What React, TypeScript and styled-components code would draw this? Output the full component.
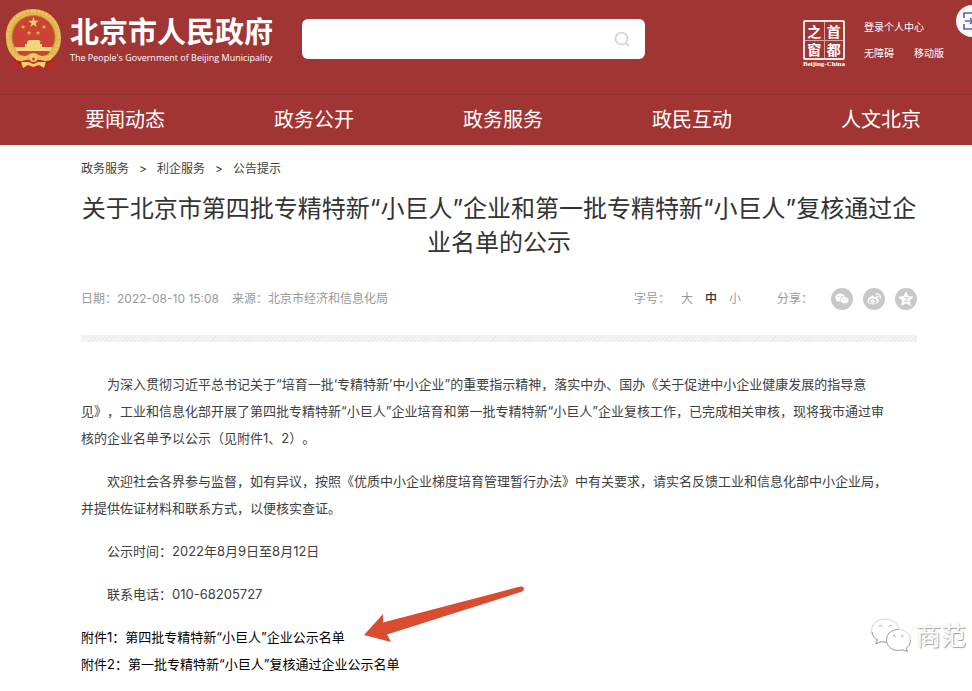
import React from "react";
import styled, { createGlobalStyle, css } from "styled-components";

const GlobalStyle = createGlobalStyle`
  *, *::before, *::after { box-sizing: border-box; }
  body {
    margin: 0;
    background: #fff;
    color: #404040;
    font-family: Inter, "Noto Sans CJK SC", sans-serif;
    font-size: 13px;
    text-spacing-trim: space-all;
    overflow-x: hidden;
  }
  h1, p, ul, ol { margin: 0; padding: 0; }
  ul, ol { list-style: none; }
  a { color: inherit; text-decoration: none; }
  button { border: 0; padding: 0; background: none; font: inherit; color: inherit; cursor: pointer; }
`;

const Page = styled.div`
  position: relative;
  min-height: 100vh;
  overflow: hidden;
`;

const Header = styled.header`
  background: #a13534;
  color: #fff;
`;

const TopBar = styled.div`
  display: flex;
  align-items: flex-start;
  height: 94px;
  padding: 8px 28px 0 5px;
`;

const Brand = styled.a`
  display: flex;
  gap: 8px;
  flex: none;
  width: 297px;
`;

const BrandText = styled.span`
  display: flex;
  flex-direction: column;
  padding-top: 3px;
  white-space: nowrap;
`;

const BrandName = styled.strong`
  font-family: "Noto Sans CJK SC", sans-serif;
  font-size: 29px;
  line-height: 38px;
  font-weight: 700;
`;

const BrandSub = styled.span`
  font-family: "Open Sans", sans-serif;
  font-size: 9px;
  line-height: 18px;
`;

const Search = styled.form`
  display: flex;
  align-items: center;
  flex: 0 1 343px;
  height: 40px;
  margin-top: 11px;
  padding-right: 15px;
  border-radius: 6px;
  background: #fff;
`;

const SearchInput = styled.input`
  flex: 1;
  min-width: 0;
  height: 100%;
  padding: 0 14px;
  border: 0;
  outline: 0;
  background: none;
  font: inherit;
`;

const SearchButton = styled.button`
  display: flex;
  color: #d2d2d2;
`;

const Seal = styled.a`
  display: flex;
  flex-direction: column;
  align-items: center;
  margin: 12px 17px 0 auto;
  width: 46px;
`;

const SealGrid = styled.span`
  display: grid;
  grid-template-columns: 1fr 1fr;
  grid-template-rows: 1fr 1fr;
  width: 42px;
  height: 40px;
  gap: 1px;
  border: 2px solid #f8e6e3;
  border-radius: 2px;
  background: #d9a5a2;
`;

const SealCell = styled.span`
  display: flex;
  align-items: center;
  justify-content: center;
  background: #a13534;
  font-family: "Noto Sans CJK SC", sans-serif;
  font-size: 14px;
  line-height: 14px;
  font-weight: 700;
`;

const SealCaption = styled.span`
  font-family: "Liberation Serif", serif;
  font-size: 7px;
  line-height: 8px;
  font-weight: 700;
  white-space: nowrap;
`;

const UserLinks = styled.nav`
  display: grid;
  grid-template-columns: auto auto;
  column-gap: 20px;
  margin-top: 6px;
  font-size: 10px;
  line-height: 26px;
  white-space: nowrap;
`;

const UserLink = styled.a<{ $wide?: boolean }>`
  ${(p) => p.$wide && css`grid-column: 1 / -1;`}
`;

const MainNav = styled.nav`
  display: flex;
  justify-content: space-between;
  align-items: center;
  height: 51px;
  padding: 0 51px 0 85px;
  border-top: 1px solid #903032;
  font-size: 20px;
  line-height: 30px;
`;

const Article = styled.main`
  padding: 12px 55px 12px 81px;
`;

const Crumbs = styled.ol`
  display: flex;
  gap: 10px;
  font-size: 12px;
  line-height: 24px;
`;

const Title = styled.h1`
  margin-top: 11px;
  color: #333;
  font-size: 24px;
  line-height: 34px;
  font-weight: 400;
  text-align: center;
`;

const Meta = styled.div`
  display: flex;
  align-items: center;
  margin-top: 27px;
  height: 24px;
  color: #999;
  font-size: 12px;
  line-height: 24px;
  white-space: nowrap;
`;

const Source = styled.span`
  margin-left: 13px;
`;

const SizeGroup = styled.div`
  display: flex;
  gap: 12px;
  margin-left: auto;
`;

const SizeLabel = styled.span`
  margin-right: -1px;
`;

const SizeButton = styled.button<{ $active?: boolean }>`
  color: ${(p) => (p.$active ? "#333" : "#999")};
  font-weight: ${(p) => (p.$active ? 500 : 400)};
`;

const ShareGroup = styled.div`
  display: flex;
  align-items: center;
  gap: 10px;
  margin-left: 36px;
`;

const ShareLabel = styled.span`
  margin-right: 8px;
`;

const ShareLink = styled.a`
  display: flex;
  width: 22px;
  height: 22px;
  border-radius: 50%;
  background: #c8c8c8;
`;

const Divider = styled.div`
  height: 7px;
  margin-top: 24px;
  background: repeating-linear-gradient(135deg, #ebebeb 0 1px, #f4f4f4 1px 3px);
`;

const Body = styled.section`
  display: flex;
  flex-direction: column;
  gap: 16px;
  margin-top: 29px;
  line-height: 27px;
`;

const Paragraph = styled.p`
  text-indent: 2em;
`;

const Attachments = styled.ul`
  color: #000;
`;

const Attachment = styled.li`
  position: relative;
  width: fit-content;
`;

const Arrow = styled.svg`
  position: absolute;
  left: 283px;
  bottom: 6px;
`;

const ScanButton = styled.button`
  position: absolute;
  top: 5px;
  right: -16px;
  display: flex;
  align-items: center;
  justify-content: center;
  width: 32px;
  height: 32px;
  border-radius: 50%;
  background: #fbf8fa;
`;

const Watermark = styled.div`
  position: absolute;
  right: 6px;
  bottom: 36px;
  display: flex;
  align-items: center;
  gap: 4px;
  color: #fff;
  font-size: 25px;
  line-height: 36px;
  text-shadow: 1px 1px 1px #a0a0a0, 0 0 1px #c4c4c4;
`;

const star = (cx: number, cy: number, r: number) =>
  Array.from({ length: 10 }, (_, i) => {
    const a = -Math.PI / 2 + (i * Math.PI) / 5;
    const d = i % 2 ? r * 0.4 : r;
    return `${(cx + d * Math.cos(a)).toFixed(2)},${(cy + d * Math.sin(a)).toFixed(2)}`;
  }).join(" ");

const Emblem = () => (
  <svg width="57" height="62" viewBox="0 0 57 62" aria-hidden="true">
    <path d="M8 45 L8 59 L17 58 L20 61 L37 61 L40 58 L49 59 L49 45Z" fill="#c3291f" />
    <path d="M9 51 Q14 56 18 56 M48 51 Q43 56 39 56" stroke="#8f1d1a" fill="none" />
    <path d="M28 1 C12 1 0 13 1 30 C1 40 5 47 12 52 L45 52 C52 47 56 40 56 30 C56 13 44 1 28 1Z" fill="#e3b552" />
    <path d="M28 3 C13 3 3 14 3 29 C3 38 7 45 13 50" fill="none" stroke="#ecca6c" strokeWidth="2" strokeDasharray="2 2" />
    <path d="M29 3 C44 3 54 14 54 29 C54 38 50 45 44 50" fill="none" stroke="#ecca6c" strokeWidth="2" strokeDasharray="2 2" />
    <circle cx="28.5" cy="29" r="21.5" fill="#cc4334" stroke="#b7862f" />
    <polygon points={star(28.5, 14.5, 5.5)} fill="#f0d06a" />
    {[[18, 19], [39, 19], [24, 25], [33, 25]].map(([x, y]) => (
      <polygon key={x} points={star(x, y, 2.6)} fill="#e8b54e" />
    ))}
    <path d="M22 34 L24 32 L34 32 L36 34 L35 34 L35 36 L37 36 L37 39 L47 39 L46 43 L11 43 L10 39 L20 39 L20 36 L22 36Z" fill="#f0d579" />
    <path d="M12 44 H45 L42 47 H15Z" fill="#cc4334" />
    <path d="M9 46 Q17 50 23 47 Q28 43 34 47 Q40 50 48 46 L46 52 Q38 55 33 50 L28.5 52 L24 50 Q19 55 11 52Z" fill="#e9c25c" />
    <circle cx="28.5" cy="50" r="4" fill="#edcd6a" />
    <circle cx="28.5" cy="51" r="1.5" fill="#c7473a" />
    <path d="M16 54 L24 54 L28.5 56 L33 54 L41 54 L39 60 L34 57 L28.5 59 L23 57 L18 60Z" fill="#efd170" />
  </svg>
);

const SearchIcon = () => (
  <svg width="16" height="16" viewBox="0 0 16 16" fill="none" stroke="currentColor" strokeWidth="1.7" aria-hidden="true">
    <circle cx="7.5" cy="7.5" r="6" />
    <path d="M11.8 11.8 L15 15" />
  </svg>
);

const WechatIcon = () => (
  <svg width="22" height="22" viewBox="0 0 22 22" aria-hidden="true">
    <path d="M9.2 5.6C6.4 5.6 4.3 7.3 4.3 9.5c0 1.2.7 2.3 1.8 3l-.4 1.6 1.8-.9c.6.2 1.2.2 1.8.2 2.6 0 4.8-1.7 4.8-3.9S11.9 5.6 9.2 5.6Z" fill="#fff" />
    <path d="M13.7 8.7c-2.5 0-4.3 1.5-4.3 3.5s1.8 3.5 4.3 3.5c.5 0 1-.1 1.5-.2l1.5.8-.4-1.4c.9-.6 1.6-1.6 1.6-2.7 0-2-1.9-3.5-4.2-3.5Z" fill="#fff" stroke="#c8c8c8" strokeWidth=".7" />
    <g fill="#c8c8c8">
      <circle cx="7.6" cy="8.5" r=".7" /><circle cx="10.8" cy="8.5" r=".7" />
      <circle cx="12.3" cy="11.3" r=".6" /><circle cx="15.2" cy="11.3" r=".6" />
    </g>
  </svg>
);

const WeiboIcon = () => (
  <svg width="22" height="22" viewBox="0 0 22 22" fill="none" aria-hidden="true">
    <path d="M9.5 7.5C7.5 8 4.5 10.8 4.5 13c0 2 2.5 3.4 5.4 3.4 3.6 0 6-2 6-3.8 0-1.2-1-1.7-1.9-1.9.6-1.6-.4-2.3-3.2-1.2.4-1.4 0-2.2-1.3-2Z" fill="#fff" />
    <ellipse cx="9.8" cy="13" rx="3.9" ry="2.6" fill="#c8c8c8" />
    <ellipse cx="9.5" cy="13.2" rx="2.2" ry="1.7" fill="#fff" />
    <circle cx="9" cy="13.5" r=".7" fill="#c8c8c8" />
    <path d="M13 5.8c2.7-.5 4.9 1.5 4.3 4.4M13.2 8c1.4-.3 2.3.5 2 1.9" stroke="#fff" strokeWidth="1.1" strokeLinecap="round" />
  </svg>
);

const QzoneIcon = () => (
  <svg width="22" height="22" viewBox="0 0 22 22" aria-hidden="true">
    <path d="M11 3.8l2.2 4.7 5 .6-3.7 3.4 1 5L11 15.1l-4.5 2.4 1-5-3.7-3.4 5-.6Z" fill="#fff" strokeLinejoin="round" stroke="#fff" strokeWidth=".6" />
    <path d="M8.8 9.6h4.4l-3.6 3.4c1.4.4 3 .4 4.4.1" stroke="#c8c8c8" strokeWidth="1" fill="none" />
  </svg>
);

const ScanIcon = () => (
  <svg width="20" height="20" viewBox="0 0 20 20" fill="none" stroke="#4e67a5" strokeWidth="1.6" aria-hidden="true">
    <path d="M7 2H2v5M2 13v5h5M2 2h12M2 18h12M13 2h5v5M18 13v5h-5M3 10h14" />
    <path d="M8 7l3 3-3 3" />
  </svg>
);

const WatermarkIcon = () => (
  <svg width="42" height="38" viewBox="0 0 42 38" fill="#fff" stroke="#d4d4d4" strokeWidth="1" aria-hidden="true">
    <path d="M15.5 2C7.5 2 1.5 7 1.5 13.5c0 4 2.1 7.2 5.5 9.3l-1.5 4.2 5-2.4c1.6.4 3.3.6 5 .6C23.5 25.2 29 20 29 13.5S23 2 15.5 2Z" />
    <path d="M2 15c.5 3.500 2.5 6 5.5 7.800L6 27l5-2.400c1.600.4 3 .6 5 .6" fill="none" stroke="#a0a0a0" />
    <path d="M28.5 12.5c-7 0-12 4.5-12 10.5s5 10.5 12 10.5c1.7 0 3.2-.2 4.7-.7l4.3 2-1.2-3.7c2.7-1.9 4.2-4.7 4.2-8.1 0-6-5-10.5-12-10.5Z" />
    <path d="M28.5 12.5c-7 0-12 4.5-12 10.5s5 10.5 12 10.5c1.7 0 3.2-.2 4.7-.7l4.3 2-1.2-3.7c2.7-1.9 4.2-4.7 4.2-8.1" fill="none" stroke="#a8a8a8" />
    <path d="M9 9.5q1.5-3 3 0M19 9.5q1.5-3 3 0M23 19.5q1.3-2.5 2.6 0M31 19.5q1.3-2.5 2.6 0" fill="none" stroke="#999" />
  </svg>
);

const sections = ["要闻动态", "政务公开", "政务服务", "政民互动", "人文北京"];
const trail = ["政务服务", "利企服务", "公告提示"];

export default function App() {
  return (
    <Page>
      <GlobalStyle />
      <Header>
        <TopBar>
          <Brand href="#">
            <Emblem />
            <BrandText>
              <BrandName>北京市人民政府</BrandName>
              <BrandSub>The People's Government of Beijing Municipality</BrandSub>
            </BrandText>
          </Brand>
          <Search role="search">
            <SearchInput type="search" aria-label="搜索" />
            <SearchButton type="button" aria-label="搜索"><SearchIcon /></SearchButton>
          </Search>
          <Seal href="#">
            <SealGrid>
              {["之", "首", "窗", "都"].map((c) => <SealCell key={c}>{c}</SealCell>)}
            </SealGrid>
            <SealCaption>Beijing-China</SealCaption>
          </Seal>
          <UserLinks>
            <UserLink href="#" $wide>登录个人中心</UserLink>
            <UserLink href="#">无障碍</UserLink>
            <UserLink href="#">移动版</UserLink>
          </UserLinks>
        </TopBar>
        <MainNav>
          {sections.map((s) => <a key={s} href="#">{s}</a>)}
        </MainNav>
      </Header>

      <Article>
        <Crumbs>
          {trail.map((t, i) => (
            <React.Fragment key={t}>
              {i > 0 && <li aria-hidden="true">&gt;</li>}
              <li><a href="#">{t}</a></li>
            </React.Fragment>
          ))}
        </Crumbs>
        <Title>
          关于北京市第四批专精特新“小巨人”企业和第一批专精特新“小巨人”复核通过企<br />业名单的公示
        </Title>
        <Meta>
          <span>日期：2022-08-10 15:08</span>
          <Source>来源：北京市经济和信息化局</Source>
          <SizeGroup>
            <SizeLabel>字号：</SizeLabel>
            <SizeButton>大</SizeButton>
            <SizeButton $active>中</SizeButton>
            <SizeButton>小</SizeButton>
          </SizeGroup>
          <ShareGroup>
            <ShareLabel>分享：</ShareLabel>
            <ShareLink href="#" aria-label="微信"><WechatIcon /></ShareLink>
            <ShareLink href="#" aria-label="微博"><WeiboIcon /></ShareLink>
            <ShareLink href="#" aria-label="QQ空间"><QzoneIcon /></ShareLink>
          </ShareGroup>
        </Meta>
        <Divider />
        <Body>
          <Paragraph>
            为深入贯彻习近平总书记关于“培育一批‘专精特新’中小企业”的重要指示精神，落实中办、国办《关于促进中小企业健康发展的指导意<br />
            见》，工业和信息化部开展了第四批专精特新“小巨人”企业培育和第一批专精特新“小巨人”企业复核工作，已完成相关审核，现将我市通过审<br />
            核的企业名单予以公示（见附件1、2）。
          </Paragraph>
          <Paragraph>
            欢迎社会各界参与监督，如有异议，按照《优质中小企业梯度培育管理暂行办法》中有关要求，请实名反馈工业和信息化部中小企业局，<br />
            并提供佐证材料和联系方式，以便核实查证。
          </Paragraph>
          <Paragraph>公示时间：2022年8月9日至8月12日</Paragraph>
          <Paragraph>联系电话：010-68205727</Paragraph>
          <Attachments>
            <Attachment>
              <a href="#">附件1：第四批专精特新“小巨人”企业公示名单</a>
              <Arrow width="161" height="60" viewBox="0 0 161 60" fill="#d94c2f" aria-hidden="true">
                <path d="M0 50 L19 29 L19 37.5 L156 1.5 Q160 1 160 4 Q160 6 157 7 L23 49.5 L27 57Z" />
              </Arrow>
            </Attachment>
            <Attachment>
              <a href="#">附件2：第一批专精特新“小巨人”复核通过企业公示名单</a>
            </Attachment>
          </Attachments>
        </Body>
      </Article>

      <ScanButton aria-label="扫一扫"><ScanIcon /></ScanButton>
      <Watermark><WatermarkIcon />商范</Watermark>
    </Page>
  );
}
